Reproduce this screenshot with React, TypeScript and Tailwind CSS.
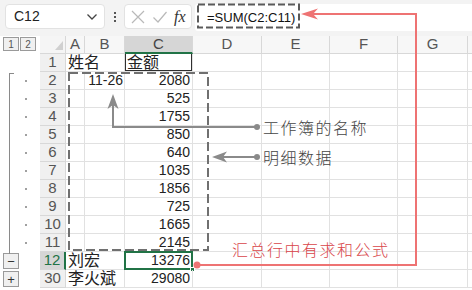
import React from "react";

const COLS: { k: string; w: number }[] = [
  { k: "A", w: 19 },
  { k: "B", w: 40 },
  { k: "C", w: 68 },
  { k: "D", w: 69 },
  { k: "E", w: 68 },
  { k: "F", w: 68 },
  { k: "G", w: 70 },
  { k: "", w: 30 },
];

type Row = { n: string; a?: string; b?: string; c?: string };
const ROWS: Row[] = [
  { n: "1", a: "姓名", c: "金额" },
  { n: "2", b: "11-26", c: "2080" },
  { n: "3", c: "525" },
  { n: "4", c: "1755" },
  { n: "5", c: "850" },
  { n: "6", c: "640" },
  { n: "7", c: "1035" },
  { n: "8", c: "1856" },
  { n: "9", c: "725" },
  { n: "10", c: "1665" },
  { n: "11", c: "2145" },
  { n: "12", a: "刘宏", c: "13276" },
  { n: "30", a: "李火斌", c: "29080" },
];

const cellBorder = "border-r border-b border-[#e1e1e1]";

function DataRow({ r }: { r: Row }) {
  const sel = r.n === "12";
  const isHeader1 = r.n === "1";
  const hasDetail = !["1", "12", "30"].includes(r.n);
  return (
    <div className="flex h-[18px]">
      <div className="w-[40px] shrink-0 flex items-center">
        {hasDetail && <div className="ml-[25px] w-[2px] h-[2px] bg-[#a0a0a0]" />}
        {r.n === "12" && (
          <div className="ml-[3px] w-[16px] h-[16px] border border-[#9a9a9a] bg-[#f0f0f0] flex items-center justify-center text-[13px] leading-none text-[#333]">
            −
          </div>
        )}
        {r.n === "30" && (
          <div className="ml-[3px] w-[16px] h-[16px] border border-[#9a9a9a] bg-[#f0f0f0] flex items-center justify-center text-[13px] leading-none text-[#333]">
            +
          </div>
        )}
      </div>
      <div
        className={
          "w-[26px] shrink-0 flex items-center justify-center text-[15px] border-b border-[#d8d8d8] " +
          (sel
            ? "bg-[#d6d6d6] text-[#217346] border-r-2 border-r-[#217346]"
            : "bg-[#f0f0f0] text-[#555] border-r border-r-[#d8d8d8]")
        }
      >
        {r.n}
      </div>
      {r.a !== undefined ? (
        <div className={"w-[59px] shrink-0 flex items-center pl-[2px] text-[16px] text-[#222] whitespace-nowrap " + cellBorder}>
          {r.a}
        </div>
      ) : (
        <>
          <div className={"w-[19px] shrink-0 " + cellBorder} />
          <div className={"w-[40px] shrink-0 flex items-center justify-end pr-[1px] text-[14px] text-[#222] " + cellBorder}>
            {r.b}
          </div>
        </>
      )}
      <div
        className={
          "w-[68px] shrink-0 flex items-center relative text-[#222] " +
          cellBorder +
          (isHeader1
            ? " justify-start pl-[2px] text-[16px] shadow-[inset_1px_0_0_#2f2f2f,inset_-1px_0_0_#2f2f2f,inset_0_-1px_0_#2f2f2f]"
            : " justify-end pr-[2px] text-[14px]")
        }
      >
        {r.c}
        {sel && (
          <>
            <div className="absolute left-[-1px] top-[-1px] right-[-1px] bottom-[-1px] border-2 border-[#217346]" />
            <div className="absolute right-[-3px] bottom-[-3px] w-[5px] h-[5px] bg-[#217346] border border-white" />
          </>
        )}
      </div>
      {COLS.slice(3).map((c, i) => (
        <div key={i} className={"shrink-0 " + cellBorder} style={{ width: c.w }} />
      ))}
    </div>
  );
}

export default function App() {
  return (
    <div className="relative w-[472px] h-[290px] overflow-hidden bg-white font-['Liberation_Sans','Noto_Sans_CJK_SC',sans-serif]">
      {/* Toolbar */}
      <div className="h-[36px] bg-[#f3f3f3] flex items-start pt-[4px]">
        <div className="ml-[5px] w-[100px] h-[25px] bg-white rounded-[4px] border border-[#e2e2e2] flex items-center justify-between pl-[8px] pr-[6px]">
          <span className="text-[14px] text-[#222]">C12</span>
          <svg width="12" height="8" viewBox="0 0 12 8">
            <path d="M1.5 1.5 L6 6 L10.5 1.5" fill="none" stroke="#444" strokeWidth="1.3" />
          </svg>
        </div>
        <div className="w-[19px] h-[25px] flex flex-col items-center justify-center gap-[2px]">
          <div className="w-[2px] h-[2px] bg-[#555]" />
          <div className="w-[2px] h-[2px] bg-[#555]" />
          <div className="w-[2px] h-[2px] bg-[#555]" />
        </div>
        <div className="w-[68px] h-[25px] bg-white rounded-[4px] border border-[#e2e2e2] flex items-center pl-[5px]">
          <svg width="16" height="16" viewBox="0 0 16 16">
            <path d="M2 2 L14 14 M14 2 L2 14" stroke="#b9b9b9" strokeWidth="1.2" />
          </svg>
          <svg width="16" height="16" viewBox="0 0 16 16" className="ml-[6px]">
            <path d="M1.5 8.5 L6 13 L14.5 3" fill="none" stroke="#b9b9b9" strokeWidth="1.2" />
          </svg>
          <span className="ml-[6px] text-[16px] italic text-[#333] font-['Liberation_Serif',serif]">fx</span>
        </div>
        <div className="ml-[3px] flex-1 h-[27px] bg-white rounded-l-[3px] flex items-center pl-[12px]">
          <span className="text-[13px] text-[#111]">=SUM(C2:C11)</span>
        </div>
      </div>

      {/* Grid */}
      <div className="relative">
        {/* Header row */}
        <div className="flex h-[18px]">
          <div className="w-[40px] shrink-0 flex items-start pt-[1px] pl-[3px]">
            <div className="w-[16px] h-[14px] border border-[#9a9a9a] bg-[#f0f0f0] flex items-center justify-center text-[10px] text-[#555]">1</div>
            <div className="ml-[1px] w-[16px] h-[14px] border border-[#9a9a9a] bg-[#f0f0f0] flex items-center justify-center text-[10px] text-[#555]">2</div>
          </div>
          <div className="w-[26px] shrink-0 bg-[#f5f5f5] border-r border-b border-[#d8d8d8] flex items-end justify-end pr-[2px] pb-[3px]">
            <svg width="8" height="9" viewBox="0 0 8 9">
              <path d="M8 0 L8 9 L0 9 Z" fill="#d0d0d0" />
            </svg>
          </div>
          {COLS.map((c, i) => (
            <div
              key={i}
              className={
                "shrink-0 flex items-center justify-center text-[15px] border-r border-[#d8d8d8] " +
                (c.k === "C"
                  ? "bg-[#d6d6d6] text-[#444] border-b-2 border-b-[#217346]"
                  : "bg-[#f7f7f7] text-[#555] border-b border-b-[#d8d8d8]")
              }
              style={{ width: c.w }}
            >
              {c.k}
            </div>
          ))}
        </div>
        {ROWS.map((r) => (
          <DataRow key={r.n} r={r} />
        ))}
        {/* outline bracket */}
        <div className="absolute left-[9px] top-[37px] w-[5px] h-[181px] border-l border-t border-[#8a8a8a]" />
      </div>

      {/* Annotation overlay */}
      <svg className="absolute left-0 top-0 pointer-events-none" width="472" height="290" viewBox="0 0 472 290">
        <rect x="198" y="4.5" width="101" height="23" fill="none" stroke="#5a5a5a" strokeWidth="2" strokeDasharray="7 3" />
        <rect x="69" y="73" width="139" height="177" fill="none" stroke="#707070" strokeWidth="2" strokeDasharray="9 4" />
        <polyline points="113,104 113,127 257,127" fill="none" stroke="#8a8a8a" strokeWidth="2" />
        <path d="M113 94 L118.5 109 L113 105 L107.5 109 Z" fill="#8a8a8a" />
        <circle cx="257" cy="127" r="3" fill="#8a8a8a" />
        <line x1="222" y1="157" x2="257" y2="157" stroke="#8a8a8a" strokeWidth="2" />
        <path d="M212 157 L227 151.5 L223 157 L227 162.5 Z" fill="#8a8a8a" />
        <circle cx="257" cy="157" r="3" fill="#8a8a8a" />
        <polyline points="312,14 416,14 416,265 197,265" fill="none" stroke="#ee7373" strokeWidth="2" />
        <path d="M301 14 L318 8.5 L313 14 L318 19.5 Z" fill="#ee7373" />
        <circle cx="197" cy="265" r="3.5" fill="#ee7373" />
      </svg>
      <div className="absolute left-[263px] top-[117px] text-[16px] leading-[20px] tracking-[1.5px] text-[#444] font-['Noto_Sans_CJK_SC',sans-serif] font-light">
        工作簿的名称
      </div>
      <div className="absolute left-[263px] top-[147px] text-[16px] leading-[20px] tracking-[1.5px] text-[#444] font-['Noto_Sans_CJK_SC',sans-serif] font-light">
        明细数据
      </div>
      <div className="absolute left-[232px] top-[239px] text-[16px] leading-[20px] tracking-[1.5px] text-[#d9454a] font-['Noto_Sans_CJK_SC',sans-serif] font-light">
        汇总行中有求和公式
      </div>
    </div>
  );
}
